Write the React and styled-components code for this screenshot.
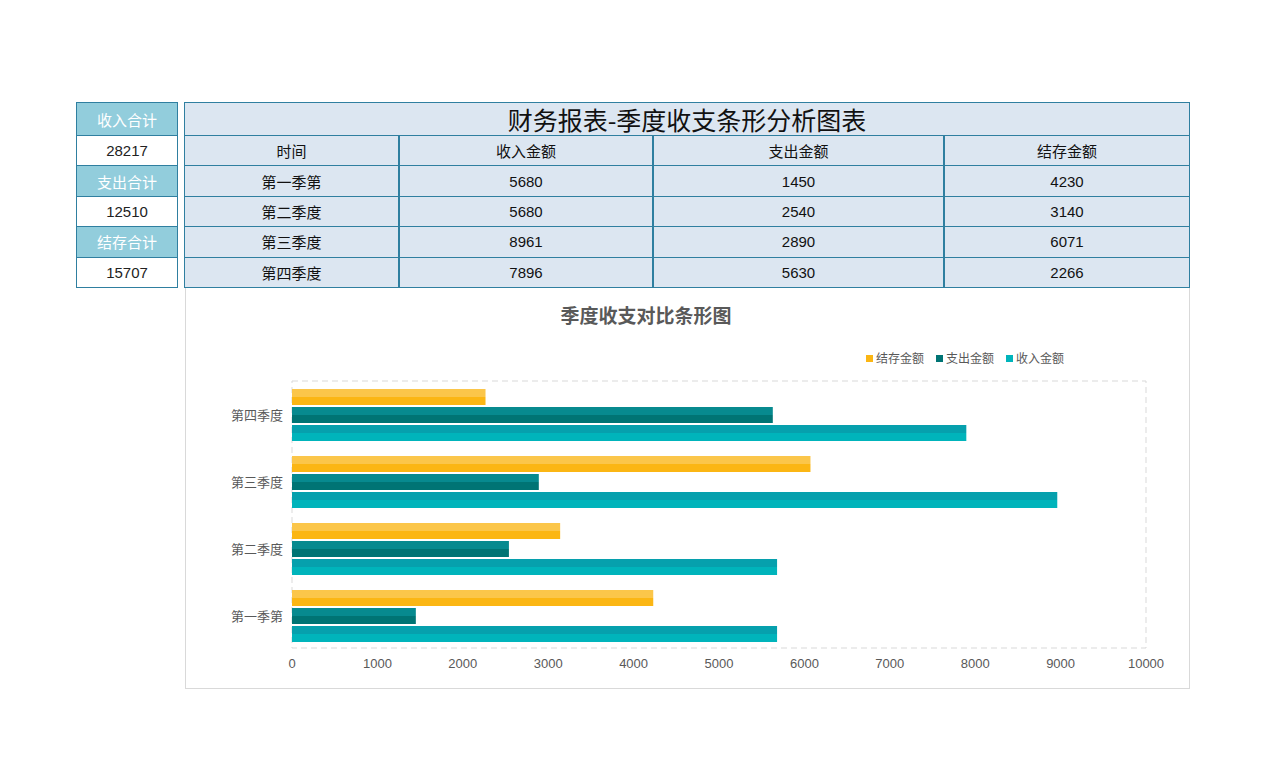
import React from 'react'
import styled, { createGlobalStyle } from 'styled-components'

const Global = createGlobalStyle`
  body { margin: 0; background: #fff; font-family: "Noto Sans CJK SC", "Noto Sans", sans-serif; }
`

const rows = [
  ['第一季第', 5680, 1450, 4230],
  ['第二季度', 5680, 2540, 3140],
  ['第三季度', 8961, 2890, 6071],
  ['第四季度', 7896, 5630, 2266],
]

const Page = styled.div`
  display: flex;
  gap: 6px;
  padding: 102px 0 0 76px;
  align-items: flex-start;
`

const Side = styled.div`
  width: 102px;
  display: flex;
  flex-direction: column;
`

const SideCell = styled.div`
  height: ${(p) => (p.first ? 34 : 30.4)}px;
  box-sizing: border-box;
  border: 1px solid #2f7fa0;
  border-top-width: ${(p) => (p.first ? 1 : 0)}px;
  background: ${(p) => (p.head ? '#92cddc' : '#fff')};
  color: ${(p) => (p.head ? '#fff' : '#222')};
  font-family: ${(p) => (p.head ? '"Noto Sans CJK SC", sans-serif' : '"Liberation Sans", sans-serif')};
  font-size: 15px;
  display: flex;
  align-items: center;
  justify-content: center;
`

const Main = styled.div`
  width: 1006px;
  display: flex;
  flex-direction: column;
`

const Title = styled.div`
  height: 34px;
  box-sizing: border-box;
  border: 1px solid #2f7fa0;
  background: #dce6f1;
  font-size: 25px;
  display: flex;
  align-items: center;
  justify-content: center;
  color: #111;
`

const Row = styled.div`
  display: grid;
  grid-template-columns: 213px 254px 291px 1fr;
  height: 30.4px;
  background: #dce6f1;
  border: 1px solid #2f7fa0;
  border-top: 0;
  box-sizing: border-box;
`

const Cell = styled.div`
  display: flex;
  align-items: center;
  justify-content: center;
  font-size: 15px;
  color: #111;
  border-left: ${(p) => (p.first ? 0 : 2)}px solid #2f7fa0;
  font-family: ${(p) => (p.num ? '"Liberation Sans", sans-serif' : '"Noto Sans CJK SC", sans-serif')};
`

const ChartBox = styled.div`
  margin-left: 1px;
  height: 401px;
  border: 1px solid #d9d9d9;
  border-top: 0;
  box-sizing: border-box;
`

const X0 = 291 - 185
const W = 854
const colors = [
  ['#fbc64a', '#fbb614'],
  ['#078a8f', '#007474'],
  ['#06a0ad', '#00b4bb'],
]

function Chart() {
  const groups = [...rows].reverse()
  return (
    <svg width="1004" height="400" fontFamily='"Noto Sans CJK SC", sans-serif'>
      <text x="460" y="35" textAnchor="middle" fontSize="19" fontWeight="bold" fill="#595959">季度收支对比条形图</text>
      {[
        ['结存金额', colors[0][1], 680],
        ['支出金额', colors[1][1], 750],
        ['收入金额', colors[2][1], 820],
      ].map(([t, c, x]) => (
        <g key={t}>
          <rect x={x} y={67} width="7" height="7" fill={c} />
          <text x={x + 10} y={75} fontSize="12" fill="#595959">{t}</text>
        </g>
      ))}
      <rect x={X0} y={93} width={W} height={267} fill="none" stroke="#d9d9d9" strokeDasharray="6 4" />
      {groups.map((r, gi) => {
        const top = 101 + gi * 67
        const vals = [r[3], r[2], r[1]]
        return (
          <g key={r[0]}>
            <text x={X0 - 9} y={top + 31} textAnchor="end" fontSize="13" fill="#595959">{r[0]}</text>
            {vals.map((v, i) => {
              const w = (v / 10000) * W
              const y = top + i * 18
              return (
                <g key={i}>
                  <rect x={X0} y={y} width={w} height="8" fill={colors[i][0]} />
                  <rect x={X0} y={y + 8} width={w} height="8" fill={colors[i][1]} />
                </g>
              )
            })}
          </g>
        )
      })}
      {Array.from({ length: 11 }, (_, i) => (
        <text key={i} x={X0 + (i * W) / 10} y={380} textAnchor="middle" fontSize="13" fill="#595959" fontFamily='"Liberation Sans", sans-serif'>{i * 1000}</text>
      ))}
    </svg>
  )
}

export default function App() {
  const side = [['收入合计', true], ['28217'], ['支出合计', true], ['12510'], ['结存合计', true], ['15707']]
  return (
    <>
      <Global />
      <Page>
        <Side>
          {side.map(([t, h], i) => (
            <SideCell key={i} head={h} first={i === 0}>{t}</SideCell>
          ))}
        </Side>
        <Main>
          <Title>财务报表-季度收支条形分析图表</Title>
          <Row>
            {['时间', '收入金额', '支出金额', '结存金额'].map((t, i) => (
              <Cell key={t} first={i === 0}>{t}</Cell>
            ))}
          </Row>
          {rows.map((r) => (
            <Row key={r[0]}>
              {r.map((v, i) => (
                <Cell key={i} first={i === 0} num={i > 0}>{v}</Cell>
              ))}
            </Row>
          ))}
          <ChartBox>
            <Chart />
          </ChartBox>
        </Main>
      </Page>
    </>
  )
}
